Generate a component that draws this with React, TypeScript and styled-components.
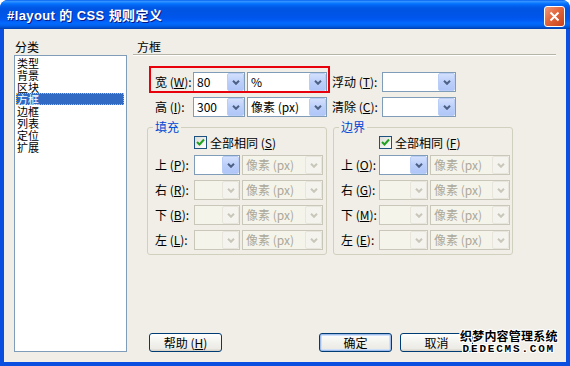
import React from "react";
import styled, { createGlobalStyle } from "styled-components";

const GlobalStyle = createGlobalStyle`
  html, body {
    margin: 0;
    padding: 0;
    background: #ffffff;
  }
  body {
    font-family: "Noto Sans CJK SC", "Liberation Sans", sans-serif;
    font-size: 12px;
    color: #000000;
  }
`;

const Window = styled.div`
  position: relative;
  width: 570px;
  height: 366px;
  display: flex;
  flex-direction: column;
  background: #0a4fe0;
  border-radius: 8px 8px 0 0;
  overflow: hidden;
`;

const TitleBar = styled.div`
  height: 29px;
  flex: none;
  display: flex;
  align-items: center;
  padding: 0 5px 0 7px;
  background: linear-gradient(
    to bottom,
    #0058ee 0%,
    #3593ff 4%,
    #288eff 7%,
    #127dff 10%,
    #036ffc 14%,
    #0262ee 20%,
    #0057e5 28%,
    #0054e3 36%,
    #0055eb 60%,
    #005bf5 70%,
    #026afe 80%,
    #0062ef 88%,
    #0052d6 94%,
    #0040ab 100%
  );
`;

const TitleText = styled.span`
  flex: 1;
  color: #ffffff;
  font-family: "Liberation Sans", "Noto Sans CJK SC", sans-serif;
  font-weight: bold;
  font-size: 13px;
  letter-spacing: 0.4px;
  text-shadow: 1px 1px 0 #0a1883;
  white-space: pre;
`;

const CloseButton = styled.div`
  width: 21px;
  height: 21px;
  margin-top: 3px;
  box-sizing: border-box;
  border: 1px solid #ffffff;
  border-radius: 3px;
  background: linear-gradient(135deg, #f09a7a 0%, #e2663c 45%, #c8401a 100%);
  display: flex;
  align-items: center;
  justify-content: center;
`;

const Body = styled.div`
  flex: 1;
  margin: 0 4px 4px;
  padding: 0 10px 10px;
  background: #f0eee6;
  display: flex;
`;

const Sidebar = styled.div`
  width: 113px;
  flex: none;
  display: flex;
  flex-direction: column;
`;

const SideLabel = styled.div`
  margin-top: 11px;
  padding-left: 1px;
  line-height: 14px;
`;

const ListBox = styled.div`
  margin-top: 1px;
  flex: 1;
  box-sizing: border-box;
  border: 1px solid #7f9db9;
  background: #ffffff;
  padding: 1px;
`;

const ListItem = styled.div<{ $selected?: boolean }>`
  height: 12px;
  font-size: 11px;
  line-height: 12px;
  padding-left: 1px;
  margin-right: 1px;
  white-space: nowrap;
  color: ${(p) => (p.$selected ? "#ffffff" : "#000000")};
  background: ${(p) => (p.$selected ? "#316ac5" : "transparent")};
  outline: ${(p) => (p.$selected ? "1px dotted #e9b64a" : "none")};
  outline-offset: -1px;
`;

const Main = styled.div`
  flex: 1;
  margin-left: 6px;
  display: flex;
  flex-direction: column;
`;

const Heading = styled.div`
  margin-top: 11px;
  padding-left: 4px;
  line-height: 14px;
  border-bottom: 1px solid #b6b4a6;
  box-shadow: 0 1px 0 #ffffff;
`;

const TopForm = styled.div`
  margin-top: 17px;
  padding-left: 22px;
  display: flex;
  flex-direction: column;
  gap: 5px;
`;

const Row = styled.div`
  position: relative;
  height: 20px;
  display: flex;
  align-items: center;
`;

const Label = styled.span<{ $w: number; $ml?: number }>`
  width: ${(p) => p.$w}px;
  margin-left: ${(p) => p.$ml ?? 0}px;
  flex: none;
  white-space: nowrap;
  line-height: 20px;
`;

const Acc = styled.span`
  text-decoration: underline;
`;

const RedMark = styled.div`
  position: absolute;
  left: -6px;
  top: -6px;
  width: 181px;
  height: 27px;
  box-sizing: border-box;
  border: 2px solid #e8000b;
  pointer-events: none;
`;

const Combo = styled.div<{ $w: number; $off?: boolean; $ml?: number }>`
  width: ${(p) => p.$w}px;
  height: 20px;
  margin-left: ${(p) => p.$ml ?? 0}px;
  flex: none;
  box-sizing: border-box;
  border: 1px solid ${(p) => (p.$off ? "#c9c7ba" : "#7f9db9")};
  background: ${(p) => (p.$off ? "#f5f4ea" : "#ffffff")};
  display: flex;
`;

const ComboText = styled.span<{ $off?: boolean }>`
  flex: 1;
  padding-left: 3px;
  line-height: 18px;
  white-space: nowrap;
  overflow: hidden;
  color: ${(p) => (p.$off ? "#aca899" : "#000000")};
`;

const DropButton = styled.span<{ $off?: boolean }>`
  width: 17px;
  flex: none;
  box-sizing: border-box;
  border: 1px solid ${(p) => (p.$off ? "#e8e6dc" : "#b9cdf6")};
  border-radius: 2px;
  background: ${(p) =>
    p.$off
      ? "#f4f3ee"
      : "linear-gradient(to bottom, #d3e0fd 0%, #bccffa 50%, #b0c6f7 100%)"};
  display: flex;
  align-items: center;
  justify-content: center;
`;

const GroupRow = styled.div`
  margin-top: 3px;
  margin-left: 14px;
  display: flex;
  gap: 6px;
`;

const Group = styled.fieldset`
  width: 180px;
  margin: 0;
  padding: 0 0 4px;
  box-sizing: border-box;
  border: 1px solid #d0d0bf;
  border-radius: 3px;
`;

const Legend = styled.legend`
  margin-left: 5px;
  padding: 0 2px;
  line-height: 14px;
  color: #0046d5;
`;

const GroupBody = styled.div`
  display: flex;
  flex-direction: column;
  gap: 5px;
`;

const CheckRow = styled.div<{ $ml: number }>`
  height: 15px;
  margin-top: 1px;
  margin-left: ${(p) => p.$ml}px;
  display: flex;
  align-items: center;
  gap: 3px;
  line-height: 15px;
`;

const CheckBox = styled.span`
  width: 13px;
  height: 13px;
  box-sizing: border-box;
  border: 1px solid #1c5180;
  background: linear-gradient(135deg, #dcdcd7 0%, #ffffff 100%);
  display: flex;
  align-items: center;
  justify-content: center;
`;

const SideRow = styled(Row)`
  padding-left: 7px;
`;

const ButtonRow = styled.div`
  margin-top: auto;
  padding-left: 16px;
  display: flex;
`;

const ButtonGroup = styled.div`
  margin-left: auto;
  margin-right: 83px;
  display: flex;
  gap: 8px;
`;

const Button = styled.div<{ $default?: boolean }>`
  width: 73px;
  height: 19px;
  box-sizing: border-box;
  border: 1px solid #003c74;
  border-radius: 3px;
  background: linear-gradient(to bottom, #ffffff 0%, #f4f4f0 40%, #ecebe6 85%, #d6d0c5 100%);
  box-shadow: ${(p) =>
    p.$default ? "inset 0 0 0 1px #9ebbea, inset 0 0 0 2px #cfe0fb" : "none"};
  text-align: center;
  line-height: 17px;
`;

const Watermark = styled.div`
  position: absolute;
  left: 460px;
  top: 328px;
  display: flex;
  flex-direction: column;
  align-items: center;
  color: #000000;
  font-weight: bold;
  text-shadow: 1px 0 0 #fff, -1px 0 0 #fff, 0 1px 0 #fff, 0 -1px 0 #fff,
    1px 1px 0 #fff, -1px -1px 0 #fff, 1px -1px 0 #fff, -1px 1px 0 #fff;
`;

const MarkTitle = styled.span`
  font-size: 12px;
  line-height: 15px;
  letter-spacing: 0.2px;
`;

const MarkSite = styled.span`
  font-family: "Liberation Mono", monospace;
  font-size: 11px;
  line-height: 13px;
  letter-spacing: 1.8px;
`;

const Chevron = ({ off }: { off?: boolean }) => (
  <svg width="8" height="5" viewBox="0 0 8 5">
    <path
      d="M1 0.8 L4 3.8 L7 0.8"
      fill="none"
      stroke={off ? "#c9c7ba" : "#4d6185"}
      strokeWidth="2"
    />
  </svg>
);

type SelectProps = {
  w: number;
  value?: string;
  off?: boolean;
  ml?: number;
};

const Select = ({ w, value, off, ml }: SelectProps) => (
  <Combo $w={w} $off={off} $ml={ml}>
    <ComboText $off={off}>{value}</ComboText>
    <DropButton $off={off}>
      <Chevron off={off} />
    </DropButton>
  </Combo>
);

const categories = ["类型", "背景", "区块", "方框", "边框", "列表", "定位", "扩展"];

type SideSpec = { name: string; key: string; firstOn?: boolean };

const paddingRows: SideSpec[] = [
  { name: "上", key: "P", firstOn: true },
  { name: "右", key: "R" },
  { name: "下", key: "B" },
  { name: "左", key: "L" },
];

const marginRows: SideSpec[] = [
  { name: "上", key: "O", firstOn: true },
  { name: "右", key: "G" },
  { name: "下", key: "M" },
  { name: "左", key: "E" },
];

type BoxGroupProps = {
  title: string;
  checkKey: string;
  checkMl: number;
  labelW: number;
  firstW: number;
  secondW: number;
  rows: SideSpec[];
};

const BoxGroup = ({ title, checkKey, checkMl, labelW, firstW, secondW, rows }: BoxGroupProps) => (
  <Group>
    <Legend>{title}</Legend>
    <GroupBody>
      <CheckRow $ml={checkMl}>
        <CheckBox>
          <svg width="9" height="9" viewBox="0 0 9 9">
            <path d="M1 4 L3.5 6.5 L8 1.5" fill="none" stroke="#21a121" strokeWidth="2" />
          </svg>
        </CheckBox>
        <span>
          全部相同 (<Acc>{checkKey}</Acc>)
        </span>
      </CheckRow>
      {rows.map((r) => (
        <SideRow key={r.key}>
          <Label $w={labelW}>
            {r.name} (<Acc>{r.key}</Acc>):
          </Label>
          <Select w={firstW} off={!r.firstOn} />
          <Select w={secondW} value="像素 (px)" off ml={2} />
        </SideRow>
      ))}
    </GroupBody>
  </Group>
);

const CloseIcon = () => (
  <svg width="11" height="11" viewBox="0 0 11 11">
    <path d="M1.5 1.5 L9.5 9.5 M9.5 1.5 L1.5 9.5" stroke="#ffffff" strokeWidth="2" />
  </svg>
);

export default function App() {
  return (
    <>
      <GlobalStyle />
      <Window>
        <TitleBar>
          <TitleText>#layout 的 CSS 规则定义</TitleText>
          <CloseButton>
            <CloseIcon />
          </CloseButton>
        </TitleBar>
        <Body>
          <Sidebar>
            <SideLabel>分类</SideLabel>
            <ListBox>
              {categories.map((c) => (
                <ListItem key={c} $selected={c === "方框"}>
                  {c}
                </ListItem>
              ))}
            </ListBox>
          </Sidebar>
          <Main>
            <Heading>方框</Heading>
            <TopForm>
              <Row>
                <RedMark />
                <Label $w={38}>
                  宽 (<Acc>W</Acc>):
                </Label>
                <Select w={52} value="80" />
                <Select w={80} value="%" ml={2} />
                <Label $w={50} $ml={5}>
                  浮动 (<Acc>T</Acc>):
                </Label>
                <Select w={74} />
              </Row>
              <Row>
                <Label $w={38}>
                  高 (<Acc>I</Acc>):
                </Label>
                <Select w={52} value="300" />
                <Select w={80} value="像素 (px)" ml={2} />
                <Label $w={50} $ml={5}>
                  清除 (<Acc>C</Acc>):
                </Label>
                <Select w={74} />
              </Row>
            </TopForm>
            <GroupRow>
              <BoxGroup
                title="填充"
                checkKey="S"
                checkMl={46}
                labelW={39}
                firstW={46}
                secondW={81}
                rows={paddingRows}
              />
              <BoxGroup
                title="边界"
                checkKey="F"
                checkMl={45}
                labelW={38}
                firstW={49}
                secondW={80}
                rows={marginRows}
              />
            </GroupRow>
            <ButtonRow>
              <Button>
                帮助 (<Acc>H</Acc>)
              </Button>
              <ButtonGroup>
                <Button $default>确定</Button>
                <Button>取消</Button>
              </ButtonGroup>
            </ButtonRow>
          </Main>
        </Body>
        <Watermark>
          <MarkTitle>织梦内容管理系统</MarkTitle>
          <MarkSite>DEDECMS.COM</MarkSite>
        </Watermark>
      </Window>
    </>
  );
}
